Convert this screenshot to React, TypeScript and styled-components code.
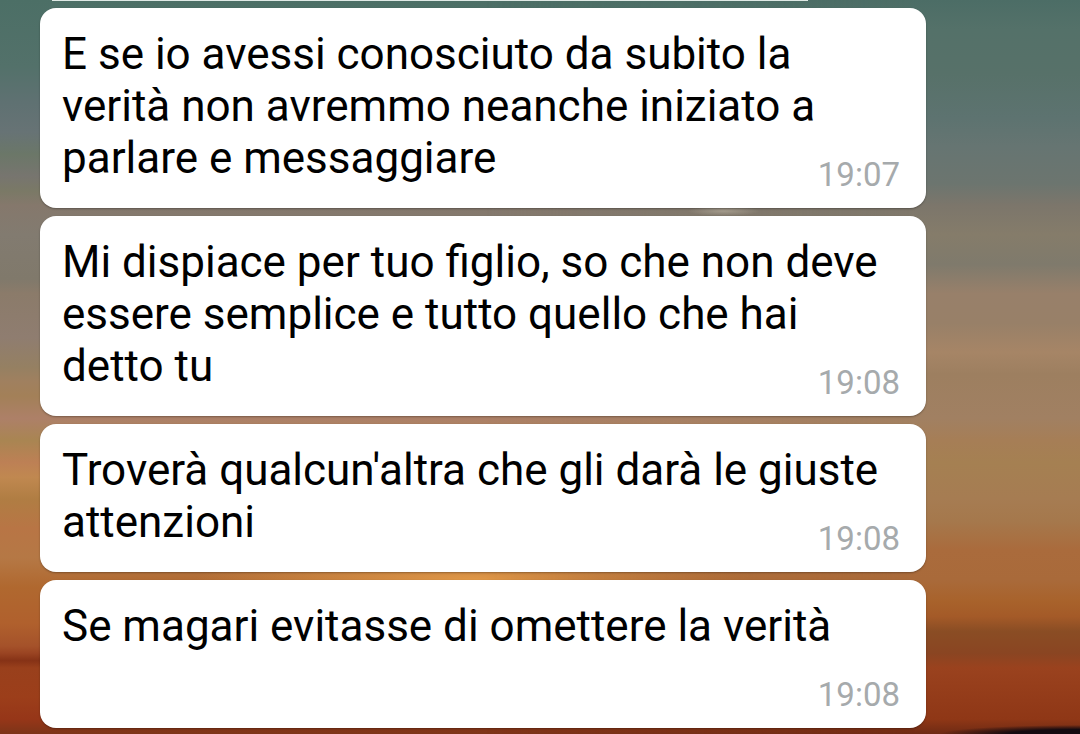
import React from "react";
import styled, { createGlobalStyle } from "styled-components";

const GlobalStyle = createGlobalStyle`
  *, *::before, *::after { box-sizing: border-box; }
  body { margin: 0; background: #4c6f66; }
`;

/* Sunset wallpaper: the left-hand sky, with the right-hand sky faded in over it. */
const Wallpaper = styled.main`
  position: relative;
  isolation: isolate;
  min-height: 100vh;
  overflow: hidden;
  font-family: Roboto, "Liberation Sans", sans-serif;
  background:
    radial-gradient(ellipse 280px 30px at 44% 79%, #e09848 0%, #e0984800 100%),
    linear-gradient(
      180deg,
      #4c6f66 0%, #53716a 9%, #5f7172 14%, #677375 18%, #6b7768 21%,
      #77756f 24%, #7a7966 26%, #85786c 28%, #827b70 32%, #80796b 38%,
      #8b7b6a 40%, #8f7d70 46%, #958062 50%, #a0805f 52%, #a38058 54%,
      #ad8068 57%, #a98552 60%, #bd8055 63%, #c08850 65%, #b07d43 68%,
      #b87545 72%, #b57845 76%, #b0682f 80%, #b0602d 85%, #a5522a 88%,
      #9a4422 89%, #863216 90%, #99401c 91%, #9c3e1a 95%, #963618 98%,
      #7c3418 100%
    );

  &::before {
    content: "";
    position: absolute;
    inset: 0;
    z-index: -1;
    background:
      radial-gradient(ellipse 140px 9px at 100% 100%, #140a10 50%, #140a1000 100%),
      linear-gradient(
        180deg,
        #4c6d66 0%, #547169 4%, #577169 10%, #5d7370 16%, #667572 20%,
        #6c756f 25%, #7c766b 28%, #857c6a 32%, #7f7a6c 36%, #98806a 40%,
        #988068 44%, #a68566 48%, #9d7f60 51%, #a18062 57%, #a67e56 60%,
        #a58052 63%, #a67c52 68%, #a5784c 71%, #aa6b3c 75%, #a96a3a 79%,
        #a8622b 82%, #a45a28 84%, #8a4d24 86%, #8a4522 89%, #9a421e 91%,
        #8f3716 98%, #6e2a14 100%
      );
    mask-image: linear-gradient(90deg, transparent 45%, #000 85%);
  }

  &::after {
    content: "";
    position: absolute;
    inset: 0;
    z-index: -1;
    background: radial-gradient(ellipse 36px 5px at 67% 211px, #a39b8c 0%, #a39b8c00 100%);
  }
`;

const EarlierBubble = styled.div`
  height: 1px;
  margin: 0 272px 0 52px;
  background: #dfe9e5;
`;

const Thread = styled.ol`
  display: flex;
  flex-direction: column;
  gap: 8px;
  margin: 0;
  padding: 7px 154px 5px 40px;
  list-style: none;
`;

const Bubble = styled.li`
  display: flow-root;
  padding: 20px 26px 13px 22px;
  border-radius: 16px;
  background: #fff;
  box-shadow: 0 1px 2px rgba(0, 0, 0, 0.3);
  font-size: 44px;
  line-height: 52px;
  color: #000;
`;

/* Sits beside the last line when there is room, and drops below it when there is not. */
const Time = styled.time`
  float: right;
  margin: 23px 0 0 16px;
  font-size: 33px;
  line-height: 40px;
  color: #a6aaac;
`;

const messages = [
  {
    text: "E se io avessi conosciuto da subito la verità non avremmo neanche iniziato a parlare e messaggiare",
    time: "19:07",
  },
  {
    text: "Mi dispiace per tuo figlio, so che non deve essere semplice e tutto quello che hai detto tu",
    time: "19:08",
  },
  {
    text: "Troverà qualcun'altra che gli darà le giuste attenzioni",
    time: "19:08",
  },
  { text: "Se magari evitasse di omettere la verità", time: "19:08" },
];

export default function App() {
  return (
    <>
      <GlobalStyle />
      <Wallpaper>
        <EarlierBubble />
        <Thread>
          {messages.map((message) => (
            <Bubble key={message.text}>
              {message.text}
              <Time>{message.time}</Time>
            </Bubble>
          ))}
        </Thread>
      </Wallpaper>
    </>
  );
}
